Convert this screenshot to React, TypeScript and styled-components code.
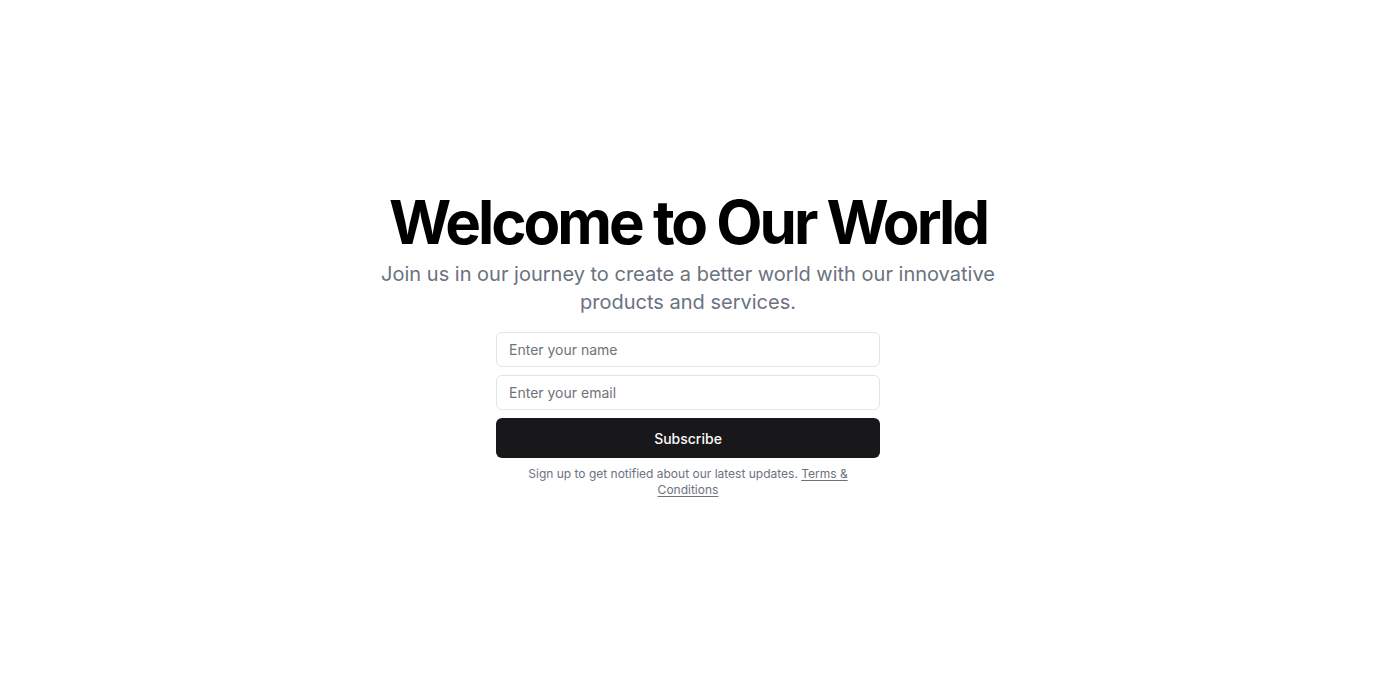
import React from "react";
import styled, { createGlobalStyle } from "styled-components";

const Global = createGlobalStyle`
  * { box-sizing: border-box; }
  html, body { margin: 0; padding: 0; background: #ffffff; }
  body { font-family: Inter, "Noto Sans", sans-serif; color: #09090b; }
`;

const Page = styled.main`
  min-height: 690px;
  display: flex;
  align-items: center;
  justify-content: center;
  padding: 0 16px;
`;

const Hero = styled.section`
  display: flex;
  flex-direction: column;
  align-items: center;
  gap: 16px;
  text-align: center;
`;

const Intro = styled.div`
  display: flex;
  flex-direction: column;
  align-items: center;
  gap: 8px;
`;

const Title = styled.h1`
  margin: 0;
  font-size: 60px;
  line-height: 1;
  font-weight: 700;
  letter-spacing: -0.05em;
  color: #000;
`;

const Lead = styled.p`
  margin: 0;
  max-width: 700px;
  font-size: 20px;
  line-height: 28px;
  color: #6b7280;
`;

const FormArea = styled.div`
  width: 100%;
  max-width: 384px;
  display: flex;
  flex-direction: column;
  align-items: center;
  gap: 8px;
`;

const Form = styled.form`
  width: 100%;
  display: flex;
  flex-direction: column;
  gap: 8px;
`;

const Input = styled.input`
  height: 35px;
  width: 100%;
  border: 1px solid #e4e4e7;
  border-radius: 6px;
  padding: 0 12px;
  font-family: Inter, sans-serif;
  font-size: 14px;
  color: #09090b;
  background: #fff;
  outline: none;
  &::placeholder { color: #71717a; }
`;

const Button = styled.button`
  height: 40px;
  width: 100%;
  border: none;
  border-radius: 6px;
  background: #18181b;
  color: #fafafa;
  font-family: Inter, sans-serif;
  font-size: 14px;
  font-weight: 500;
  cursor: pointer;
`;

const Note = styled.p`
  margin: 0;
  max-width: 340px;
  font-size: 12px;
  line-height: 16px;
  color: #6b7280;
`;

const TermsLink = styled.a`
  color: inherit;
  text-decoration: underline;
  text-underline-offset: 2px;
`;

export default function App() {
  return (
    <>
      <Global />
      <Page>
        <Hero>
          <Intro>
            <Title>Welcome to Our World</Title>
            <Lead>
              Join us in our journey to create a better world with our innovative
              products and services.
            </Lead>
          </Intro>
          <FormArea>
            <Form onSubmit={(e) => e.preventDefault()}>
              <Input type="text" placeholder="Enter your name" />
              <Input type="email" placeholder="Enter your email" />
              <Button type="submit">Subscribe</Button>
            </Form>
            <Note>
              Sign up to get notified about our latest updates.{" "}
              <TermsLink href="#">Terms &amp; Conditions</TermsLink>
            </Note>
          </FormArea>
        </Hero>
      </Page>
    </>
  );
}
